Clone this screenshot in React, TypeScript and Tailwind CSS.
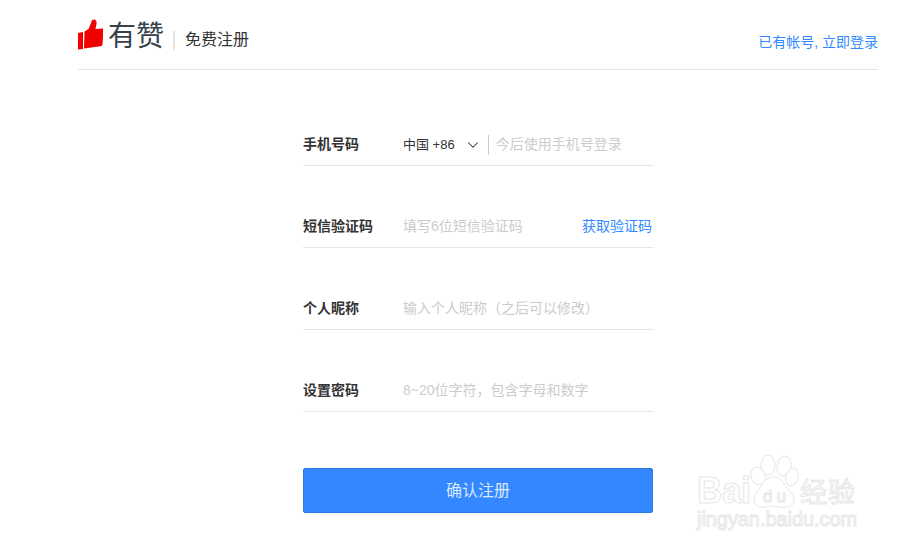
import React from 'react';
import { ChevronDown } from 'lucide-react';

const font = "font-['Liberation_Sans','Noto_Sans_CJK_SC',sans-serif]";

function Field({ label, children }: { label: string; children: React.ReactNode }) {
  return (
    <div className="mt-10 flex h-[42px] items-center border-b border-[#e5e5e5] first:mt-0">
      <label className="w-[100px] shrink-0 text-[14px] font-bold text-[#333]">{label}</label>
      {children}
    </div>
  );
}

function Watermark() {
  return (
    <svg className="absolute left-[690px] top-[440px]" width="218" height="112" viewBox="0 0 218 112" fill="#fff" stroke="#e6e6e6" strokeWidth="1">
      {/* paw */}
      <ellipse cx="78" cy="25" rx="7" ry="10" />
      <ellipse cx="94" cy="26" rx="7" ry="10" transform="rotate(12 94 26)" />
      <ellipse cx="68" cy="36" rx="7" ry="9" transform="rotate(-20 68 36)" />
      <ellipse cx="102" cy="37" rx="6" ry="9" transform="rotate(15 102 37)" />
      <path d="M72 44c-3 7-8 9-8 16 0 6 6 8 12 7 5-1 9-1 14 0 7 1 14-1 14-7 0-7-6-9-10-16-2-4-6-7-11-7s-9 3-11 7z" />
      <text x="7" y="63" fontSize="36" fontFamily="Liberation Sans" fontWeight="700" textLength="54" lengthAdjust="spacingAndGlyphs">Bai</text>
      <text x="73" y="62" fontSize="17" fontFamily="Liberation Sans" textLength="23">du</text>
      <text x="110" y="62" fontSize="27" fontFamily="Noto Sans CJK SC" textLength="55">经验</text>
      <text x="7" y="86" fontSize="20" fontFamily="Liberation Sans" textLength="160" lengthAdjust="spacingAndGlyphs">jingyan.baidu.com</text>
    </svg>
  );
}

export default function App() {
  return (
    <div className={`relative h-[552px] w-[908px] overflow-hidden bg-white ${font}`}>
      {/* Header */}
      <header className="ml-[78px] mr-[30px] flex h-[70px] items-center justify-between border-b border-[#e5e5e5]">
        <div className="flex items-center">
          <svg width="25" height="31" viewBox="0 0 25 31">
            <path d="M0 14l5-1v17l-5 .5z" fill="#f00000" />
            <path d="M6.500 12.500l4-2.500 2.500-6c.5-2 1-3.500 3-3.500s3 2 2.500 4.500l-1 5 6.500-.5c1-.1 1.500.6 1.500 1.500l-1 14c-.1 1.500-.8 2.200-2 2.300l-16.500 2.200z" fill="#f00000" />
          </svg>
          <span className="ml-[5px] pt-[4px] text-[28px] leading-none text-[#38424c]">有赞</span>
          <span className="ml-[9px] mt-[12px] h-[19px] w-[2px] bg-[#e5e5e5]" />
          <span className="ml-[10px] pt-[10px] text-[16px] text-[#333]">免费注册</span>
        </div>
        <a className="mt-[15px] text-[14px] text-[#38f]">已有帐号, 立即登录</a>
      </header>

      {/* Form */}
      <form className="ml-[303px] mt-[54px] w-[350px]">
        <Field label="手机号码">
          <span className="text-[13px] text-[#333]">中国 +86</span>
          <ChevronDown className="ml-[9px] h-[18px] w-[18px] text-[#333]" strokeWidth={1.4} />
          <span className="ml-[6px] h-[20px] w-px bg-[#ccc]" />
          <input className="ml-[7px] min-w-0 flex-1 text-[14px] outline-none placeholder:text-[#ccc]" placeholder="今后使用手机号登录" />
        </Field>
        <Field label="短信验证码">
          <input className="min-w-0 flex-1 text-[14px] outline-none placeholder:text-[#ccc]" placeholder="填写6位短信验证码" />
          <a className="mr-px text-[14px] text-[#38f]">获取验证码</a>
        </Field>
        <Field label="个人昵称">
          <input className="min-w-0 flex-1 text-[14px] outline-none placeholder:text-[#ccc]" placeholder="输入个人昵称（之后可以修改）" />
        </Field>
        <Field label="设置密码">
          <input className="min-w-0 flex-1 text-[14px] outline-none placeholder:text-[#ccc]" placeholder="8~20位字符，包含字母和数字" />
        </Field>
        <button type="button" className="mt-[56px] h-[45px] w-full rounded-[2px] border border-[#2f7be0] bg-[#38f] text-[16px] text-white/80">
          确认注册
        </button>
      </form>

      <Watermark />
    </div>
  );
}
